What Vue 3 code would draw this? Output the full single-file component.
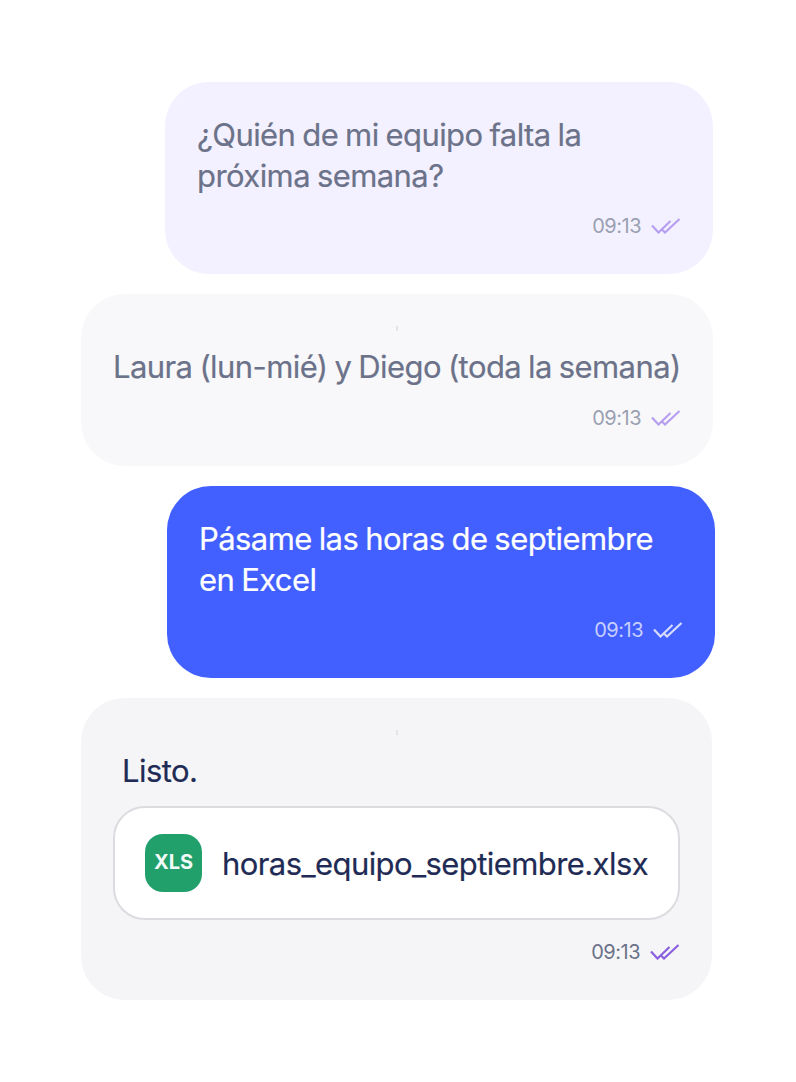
<script setup>
const time = '09:13'
</script>

<template>
  <main class="chat">
    <section class="bubble b1">
      <p class="msg">¿Quién de mi equipo falta la<br />próxima semana?</p>
      <div class="meta"><span>{{ time }}</span>
        <svg class="ticks" viewBox="0 0 30 16" fill="none"><path d="M1 7.500l6.500 7L19.500 3M10.500 11l3.500 3.500L28.500 1" /></svg>
      </div>
    </section>
    <section class="bubble b2">
      <i class="speck"></i>
      <p class="msg">Laura (lun-mié) y Diego (toda la semana)</p>
      <div class="meta"><span>{{ time }}</span>
        <svg class="ticks" viewBox="0 0 30 16" fill="none"><path d="M1 7.500l6.500 7L19.500 3M10.500 11l3.500 3.500L28.500 1" /></svg>
      </div>
    </section>
    <section class="bubble b3">
      <p class="msg">Pásame las horas de septiembre<br />en Excel</p>
      <div class="meta"><span>{{ time }}</span>
        <svg class="ticks" viewBox="0 0 30 16" fill="none"><path d="M1 7.500l6.500 7L19.500 3M10.500 11l3.500 3.500L28.500 1" /></svg>
      </div>
    </section>
    <section class="bubble b4">
      <i class="speck"></i>
      <p class="msg listo">Listo.</p>
      <div class="file">
        <div class="xls">XLS</div>
        <span class="name">horas_equipo_septiembre.xlsx</span>
      </div>
      <div class="meta"><span>{{ time }}</span>
        <svg class="ticks" viewBox="0 0 30 16" fill="none"><path d="M1 7.500l6.500 7L19.500 3M10.500 11l3.500 3.500L28.500 1" /></svg>
      </div>
    </section>
  </main>
</template>

<style scoped>
.chat {
  width: 796px;
  height: 1082px;
  box-sizing: border-box;
  padding-top: 82px;
  display: flex;
  flex-direction: column;
  gap: 20px;
  background: #fff;
  font-family: Inter, "Liberation Sans", sans-serif;
  overflow: hidden;
}
.bubble {
  position: relative;
  box-sizing: border-box;
  border-radius: 44px;
  padding: 32px;
}
.msg {
  margin: 0;
  font-size: 31px;
  line-height: 41px;
  letter-spacing: -0.58px;
  word-spacing: -1.2px;
  color: #6b7289;
  -webkit-text-stroke: 0.2px currentColor;
}
.b1 { margin-left: 165px; width: 548px; height: 192px; background: #f3f1ff; }
.b2 { margin-left: 81px; width: 632px; height: 172px; background: #f8f8fa; padding-top: 52px; }
.b3 { margin-left: 167px; width: 548px; height: 192px; background: #425fff; }
.b3 .msg { color: #fff; }
.b4 { margin-left: 81px; width: 631px; height: 302px; background: #f5f5f8; padding-top: 52px; }
.b4 .msg { color: #1f2b54; }
.listo { margin-left: 9px; }
.speck {
  position: absolute;
  left: 315px;
  top: 32px;
  width: 2px;
  height: 5px;
  background: #e4e4e8;
}
.meta {
  margin-top: 16px;
  height: 28px;
  display: flex;
  justify-content: flex-end;
  align-items: center;
  gap: 10px;
  font-size: 20px;
  letter-spacing: -0.5px;
  color: #9aa0b2;
}
.b2 .meta { margin-top: 17px; }
.b4 .meta { margin-top: 18px; color: #6b7289; }
.b3 .meta { color: #c6cfff; }
.ticks { width: 30px; height: 16px; }
.ticks path { stroke: #b79ff0; stroke-width: 2.2; }
.b3 .ticks path { stroke: #d5dcff; }
.b4 .ticks path { stroke: #8a5fe0; }
.file {
  box-sizing: border-box;
  margin-top: 15px;
  width: 567px;
  height: 114px;
  display: flex;
  align-items: center;
  gap: 20px;
  padding-left: 30px;
  background: #fff;
  border: 2px solid #dcdce0;
  border-radius: 32px;
}
.xls {
  width: 57px;
  height: 58px;
  flex: none;
  border-radius: 18px;
  background: #21a06c;
  color: #f2fbf7;
  font-size: 20px;
  font-weight: 700;
  padding-bottom: 2px;
  box-sizing: border-box;
  display: flex;
  align-items: center;
  justify-content: center;
  letter-spacing: -0.1px;
}
.name {
  font-size: 31px;
  letter-spacing: -0.58px;
  color: #1f2b54;
  -webkit-text-stroke: 0.2px currentColor;
}
</style>
